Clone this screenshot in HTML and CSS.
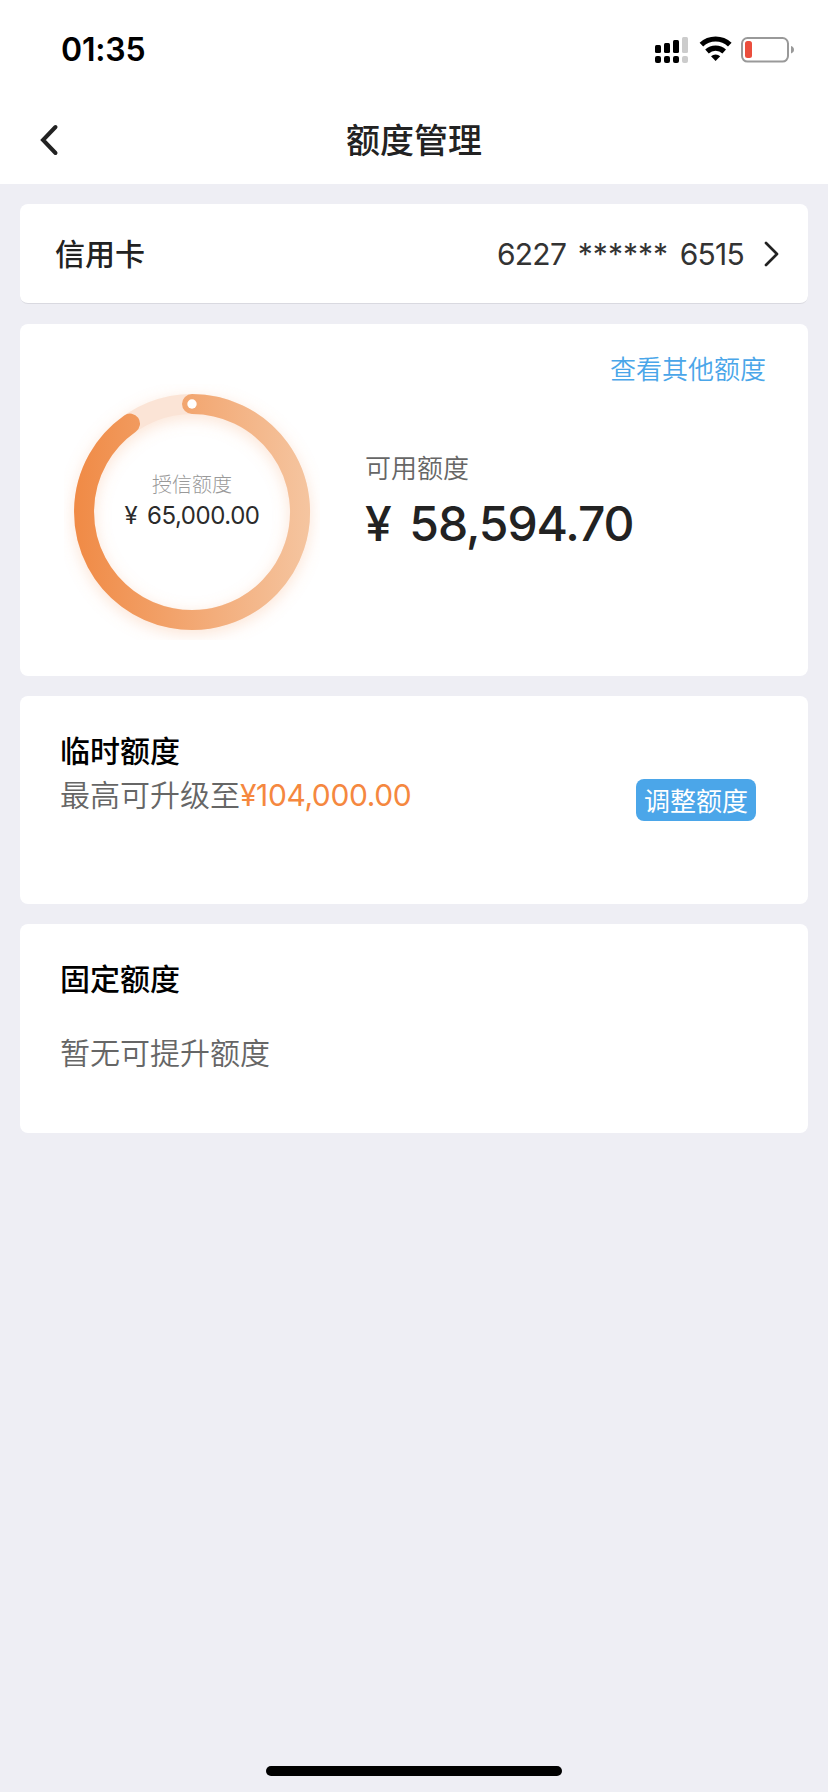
FILE: index.html
```html
<!DOCTYPE html>
<html lang="zh-CN">
<head>
<meta charset="utf-8">
<title>额度管理</title>
<link rel="stylesheet" href="styles.css">
</head>
<body>
<div class="screen">
  <header class="header">
    <div class="status-bar">
      <span class="clock">01:35</span>
      <svg class="status-icons" width="142" height="28" viewBox="0 0 142 28">
        <g fill="#000">
          <rect x="1" y="10" width="6" height="8" rx="1.5"/>
          <rect x="10" y="8" width="6" height="10" rx="1.5"/>
          <rect x="19" y="5" width="6" height="13" rx="1.5"/>
          <rect x="1" y="21" width="6" height="7" rx="2"/>
          <rect x="10" y="21" width="6" height="7" rx="2"/>
          <rect x="19" y="21" width="6" height="7" rx="2"/>
        </g>
        <g fill="#ccc">
          <rect x="28" y="2" width="6" height="16" rx="1.5"/>
          <rect x="28" y="21" width="6" height="7" rx="2"/>
        </g>
        <g fill="none" stroke="#000" stroke-width="5.2">
          <path d="M47.400 9.700A20.600 20.600 0 0 1 75.800 9.700"/>
          <path d="M53 16.500A12.500 12.500 0 0 1 70.200 16.500"/>
        </g>
        <path d="M57 21.300A7 7 0 0 1 66.200 21.300L61.600 26Z"/>
        <rect x="88" y="3" width="46" height="23.6" rx="5.5" fill="none" stroke="#999" stroke-width="2"/>
        <rect x="91" y="6" width="7" height="17" rx="2.5" fill="#eb4e3d"/>
        <path d="M137 11Q140 12 140 14.8Q140 17.500 137 18.500Z" fill="#999"/>
      </svg>
    </div>
    <div class="nav-bar">
      <svg class="back" width="20" height="34" viewBox="0 0 20 34"><path d="M15.500 4L3 17L15.500 30" fill="none" stroke="#222" stroke-width="4" stroke-linecap="round"/></svg>
      <h1 class="title">额度管理</h1>
    </div>
  </header>

  <main class="cards">
    <section class="card card-select">
      <span class="card-label">信用卡</span>
      <span class="card-number">6227 <span class="mask">******</span> 6515</span>
      <svg class="chevron" width="16" height="26" viewBox="0 0 16 26"><path d="M2 2L13 13L2 24" fill="none" stroke="#222" stroke-width="2.700" stroke-linecap="round" stroke-linejoin="round"/></svg>
    </section>

    <section class="card card-quota">
      <a class="other-link">查看其他额度</a>
      <div class="quota-body">
        <div class="ring">
          <svg class="ring-chart" width="256" height="256" viewBox="0 0 256 256">
            <defs>
              <linearGradient id="arc" gradientUnits="userSpaceOnUse" x1="10" y1="0" x2="246" y2="0">
                <stop offset="0" stop-color="#f08a45"/>
                <stop offset="1" stop-color="#f5c5a0"/>
              </linearGradient>
              <filter id="glow" filterUnits="userSpaceOnUse" x="0" y="0" width="256" height="256"><feGaussianBlur stdDeviation="8"/></filter>
            </defs>
            <circle cx="128" cy="132" r="108" fill="none" stroke="#f5a673" stroke-opacity=".3" stroke-width="20" filter="url(#glow)"/>
            <circle cx="128" cy="128" r="108" fill="none" stroke="#fbe4d6" stroke-width="20"/>
            <path d="M128 20A108 108 0 1 1 66 39.600" fill="none" stroke="url(#arc)" stroke-width="20" stroke-linecap="round"/>
            <circle cx="128" cy="20" r="4.700" fill="#fff"/>
          </svg>
          <div class="ring-text">
            <span class="ring-label">授信额度</span>
            <span class="ring-amount">¥ 65,000.00</span>
          </div>
        </div>
        <div class="available">
          <span class="available-label">可用额度</span>
          <span class="available-amount">¥ 58,594.70</span>
        </div>
      </div>
    </section>

    <section class="card card-temp">
      <div class="temp-info">
        <h2 class="section-title">临时额度</h2>
        <p class="section-text">最高可升级至<span class="highlight">¥104,000.00</span></p>
      </div>
      <button class="adjust">调整额度</button>
    </section>

    <section class="card card-fixed">
      <h2 class="section-title">固定额度</h2>
      <p class="section-text fixed-text">暂无可提升额度</p>
    </section>
  </main>
  <div class="home-indicator"></div>
</div>
</body>
</html>
```
FILE: styles.css
```css
* { box-sizing: border-box; }

body {
  margin: 0;
  background: #eeeef4;
  font-family: "Noto Sans CJK SC", sans-serif;
  color: #222;
}

h1, h2, p { margin: 0; }

svg { display: block; flex: none; }

.screen {
  display: flex;
  flex-direction: column;
  width: 828px;
  height: 1792px;
}

.header {
  height: 184px;
  background: #fff;
}

.status-bar {
  display: flex;
  justify-content: space-between;
  align-items: flex-start;
  height: 96px;
  padding: 35px 32px 0 61px;
}

.clock {
  font: 600 32px/30px Inter, sans-serif;
  color: #000;
  letter-spacing: -0.2px;
}

.nav-bar {
  display: grid;
  grid-template-columns: 60px 1fr 60px;
  align-items: center;
  height: 88px;
  padding: 0 40px;
}

.title {
  grid-column: 2;
  padding-bottom: 2px;
  text-align: center;
  font-size: 34px;
  line-height: 48px;
  font-weight: 500;
}

.cards {
  display: flex;
  flex-direction: column;
  gap: 20px;
  padding: 20px 20px 0;
}

.card {
  background: #fff;
  border-radius: 8px;
}

.card-select {
  display: flex;
  align-items: center;
  height: 100px;
  padding: 0 28px 0 35px;
  border-bottom: 1px solid #d9d9e0;
}

.card-label {
  flex: 1;
  padding-bottom: 4px;
  font-size: 30px;
  line-height: 44px;
  font-weight: 500;
}

.card-number {
  font: 400 30px/44px Inter, sans-serif;
  letter-spacing: -0.75px;
  word-spacing: 4px;
  margin-right: 20px;
  color: #333;
}

.mask { letter-spacing: 0; }

.card-quota {
  height: 352px;
}

.other-link {
  display: block;
  padding: 25px 42px 0 0;
  text-align: right;
  font-size: 26px;
  line-height: 38px;
  font-weight: 350;
  color: #4aa6e9;
}

.quota-body {
  display: flex;
  padding-left: 44px;
  margin-top: -3px;
}

.ring {
  display: grid;
  width: 256px;
  height: 256px;
}

.ring-chart, .ring-text { grid-area: 1 / 1; }

.ring-text {
  display: flex;
  flex-direction: column;
  align-items: center;
  padding-top: 85px;
}

.ring-label {
  font-size: 20px;
  line-height: 30px;
  font-weight: 300;
  color: #999;
}

.ring-amount {
  font: 400 24px/34px Inter, sans-serif;
  letter-spacing: -0.45px;
  word-spacing: 3.5px;
  color: #2b2b2b;
}

.available {
  display: flex;
  flex-direction: column;
  margin-left: 45px;
  padding-top: 64px;
}

.available-label {
  font-size: 26px;
  line-height: 38px;
  font-weight: 350;
  color: #666;
}

.available-amount {
  font: 500 48px/58px Inter, sans-serif;
  margin-top: 9px;
  letter-spacing: -1.1px;
  word-spacing: 7px;
}

.card-temp {
  display: flex;
  justify-content: space-between;
  align-items: flex-start;
  height: 208.4px;
  padding: 31px 52px 0 40px;
}

.section-title {
  font-size: 30px;
  line-height: 44px;
  font-weight: 500;
  color: #000;
}

.section-text {
  font-size: 30px;
  line-height: 44px;
  font-weight: 350;
  color: #666;
}

.highlight {
  font-family: Inter, sans-serif;
  font-weight: 400;
  letter-spacing: -0.4px;
  color: #f5883f;
}

.adjust {
  width: 120px;
  height: 42px;
  margin-top: 52px;
  padding: 0;
  border: 0;
  border-radius: 8px;
  background: #4ba6e9;
  color: #fff;
  font: 400 26px/38px "Noto Sans CJK SC", sans-serif;
}

.card-fixed {
  height: 208.4px;
  padding: 31px 40px 0;
}

.fixed-text { margin-top: 30px; }

.home-indicator {
  width: 296px;
  height: 10px;
  margin: auto auto 16px;
  border-radius: 5px;
  background: #000;
}
```
